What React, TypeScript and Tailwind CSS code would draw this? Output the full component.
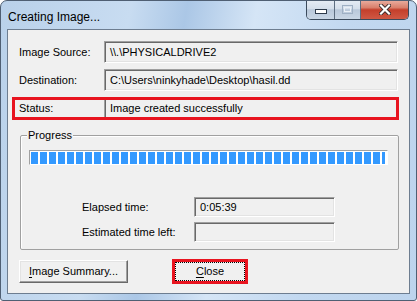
import React from 'react'

const FONT = { fontFamily: '"Liberation Sans", Arial, sans-serif' }

function Field({ children, className = '' }: { children?: React.ReactNode; className?: string }) {
  return (
    <div
      className={`flex items-center pl-[5px] border border-t-[#a0a0a0] border-l-[#a0a0a0] border-b-white border-r-white shadow-[inset_1px_1px_0_#696969,inset_-1px_-1px_0_#e3e3e3] bg-[#f0f0f0] text-[11px] text-black whitespace-nowrap overflow-hidden ${className}`}
    >
      {children}
    </div>
  )
}

function Row({ label, value }: { label: string; value: string }) {
  return (
    <div className="flex items-center h-[22px]">
      <div className="w-[85px] text-[11px] text-black">{label}</div>
      <Field className="flex-1 h-[22px]">{value}</Field>
    </div>
  )
}

function CaptionButtons() {
  return (
    <div className="flex -mt-px h-[20px] border border-t-0 border-[#3b4a5c] rounded-b-[5px] overflow-hidden">
      <div className="w-[28px] flex items-center justify-center border-r border-[#5d6d80] bg-[linear-gradient(to_bottom,#e6edf5_0%,#d5dfeb_45%,#b9c8da_52%,#c9d6e5_100%)]">
        <svg width="12" height="5" viewBox="0 0 12 5" className="mt-[4px]">
          <rect x="0.5" y="0.5" width="11" height="4" fill="#ffffff" stroke="#2d3a4a" />
        </svg>
      </div>
      <div className="w-[26px] flex items-center justify-center border-r border-[#5d6d80] bg-[linear-gradient(to_bottom,#e6edf5_0%,#d5dfeb_45%,#b9c8da_52%,#c9d6e5_100%)]">
        <svg width="11" height="9" viewBox="0 0 11 9" className="-mt-[1px]">
          <rect x="0.5" y="0.5" width="10" height="8" fill="none" stroke="#9fb0c4" />
          <rect x="2.5" y="2.5" width="6" height="4" fill="none" stroke="#e9eff6" />
        </svg>
      </div>
      <div className="w-[47px] flex items-center justify-center bg-[linear-gradient(to_bottom,#ebb0a2_0%,#d9806c_40%,#c43f2b_52%,#cf5844_100%)]">
        <svg width="12" height="11" viewBox="0 0 12 11">
          <path d="M2 1.5 L10 9.5 M10 1.5 L2 9.5" stroke="#3a2a2a" strokeWidth="4" strokeLinecap="square" />
          <path d="M2 1.5 L10 9.5 M10 1.5 L2 9.5" stroke="#ffffff" strokeWidth="2.2" strokeLinecap="square" />
        </svg>
      </div>
    </div>
  )
}

export default function App() {
  const blocks = Array.from({ length: 40 }, (_, i) => i)

  return (
    <div
      style={FONT}
      className="w-[417px] h-[301px] flex flex-col border border-[#4f5f73] rounded-t-[7px] rounded-b-[3px] overflow-hidden bg-[linear-gradient(100deg,#b9d1ea_0%,#c8dcf1_28%,#abc7e6_40%,#d5e5f6_55%,#c2d8f0_75%,#bdd4ed_100%)]"
    >
      {/* title bar */}
      <div className="h-[28px] flex items-start justify-between shrink-0">
        <div className="pl-[7px] pt-[7px] text-[12px] text-black">Creating Image...</div>
        <div className="mr-[7px]">
          <CaptionButtons />
        </div>
      </div>

      {/* client area */}
      <div className="ml-[6px] w-[403px] h-[265px] border border-[#6d7d90] bg-[#f0f0f0] flex flex-col pt-[11px] px-[11px] shrink-0">
        <div className="flex flex-col gap-[6px]">
          <Row label="Image Source:" value={'\\\\.\\PHYSICALDRIVE2'} />
          <Row label="Destination:" value={'C:\\Users\\ninkyhade\\Desktop\\hasil.dd'} />
          <div className="relative">
            <Row label="Status:" value="Image created successfully" />
            <div className="absolute -left-[7px] -right-[1px] top-0 -bottom-[1px] border-[3px] border-[#e8141f] pointer-events-none" />
          </div>
        </div>

        {/* progress group */}
        <div className="relative mt-[16px] ml-[1px] w-[379px] h-[115px] border border-[#a0a0a0] rounded-[2px] shadow-[inset_1px_1px_0_#ffffff] pt-[14px] pl-[8px]">
          <div className="absolute left-[6px] -top-[8px] px-[1px] bg-[#f0f0f0] text-[11px] text-black leading-[14px]">Progress</div>

          <div className="w-[359px] h-[15px] border border-t-[#a0a0a0] border-l-[#a0a0a0] border-b-white border-r-white bg-white p-px pl-[1px] overflow-hidden">
            <div className="flex gap-[2px] h-[12px] w-[354px] overflow-hidden">
              {blocks.map((i) => (
                <div key={i} className="w-[7px] h-full shrink-0 bg-[#3399ff]" />
              ))}
            </div>
          </div>

          <div className="flex flex-col gap-[5px] mt-[32px] pl-[53px]">
            <div className="flex items-center h-[20px]">
              <div className="w-[112px] text-[11px] text-black">Elapsed time:</div>
              <Field className="w-[141px] h-[20px]">0:05:39</Field>
            </div>
            <div className="flex items-center h-[20px]">
              <div className="w-[112px] text-[11px] text-black">Estimated time left:</div>
              <Field className="w-[141px] h-[20px]" />
            </div>
          </div>
        </div>

        {/* buttons */}
        <div className="flex items-center mt-[9px]">
          <button className="w-[109px] h-[23px] border border-t-white border-l-white border-b-[#696969] border-r-[#696969] shadow-[inset_-1px_-1px_0_#a0a0a0,inset_1px_1px_0_#e3e3e3] bg-[#f0f0f0] text-[11px] text-black">
            <span className="underline underline-offset-2">I</span>mage Summary...
          </button>
          <div className="ml-[44px] w-[76px] h-[25px] border-[3px] border-[#e8141f]">
            <button className="w-full h-full border border-dotted border-black bg-[#f0f0f0] text-[11px] text-black flex items-center justify-center">
              <span className="underline underline-offset-2">C</span>lose
            </button>
          </div>
        </div>
      </div>
    </div>
  )
}
